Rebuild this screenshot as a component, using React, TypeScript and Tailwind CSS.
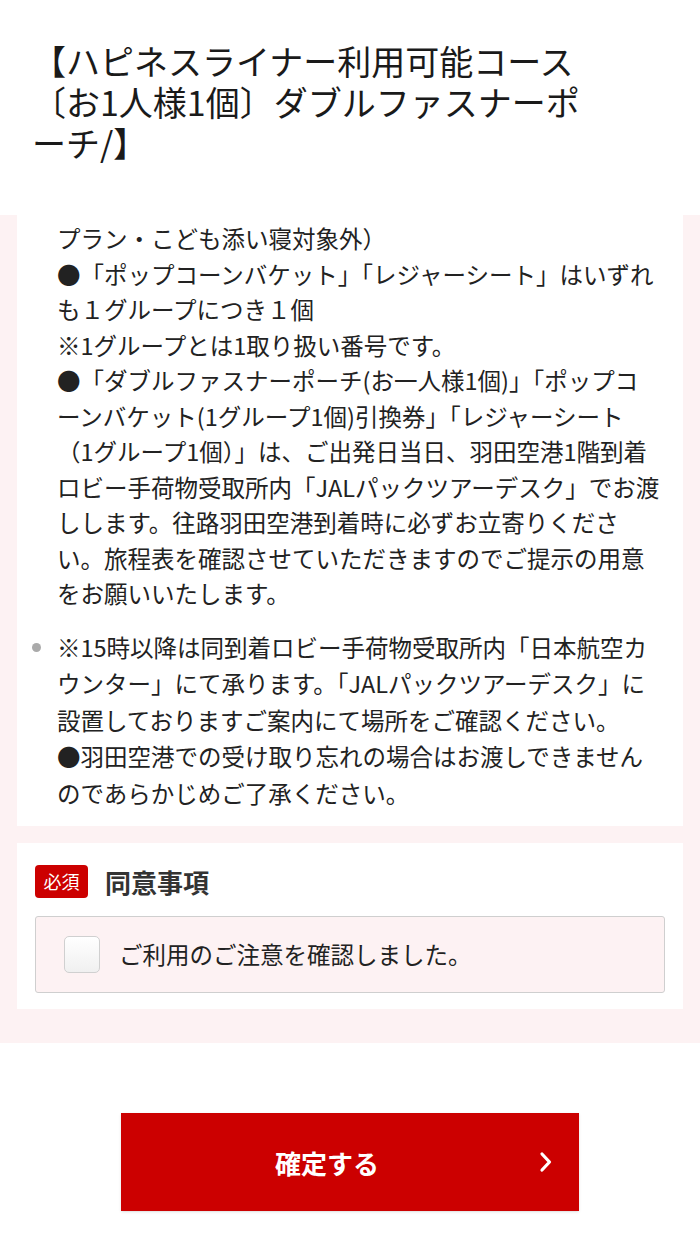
import React from 'react'

const font = { fontFamily: '"Noto Sans CJK JP", "Noto Sans", sans-serif' }

const App: React.FC = () => {
    return (
        <div className="w-[700px] min-h-[1247px] bg-white text-[#222]" style={font}>
            <header className="pl-[32px] pt-[40px] pb-[52px]">
                <h1 className="w-[562px] text-[34px] leading-[41px] text-[#1a1a1a]">
                    【ハピネスライナー利用可能コース〔お1人様1個〕ダブルファスナーポーチ/】
                </h1>
            </header>

            <main className="bg-[#fdf2f3] pb-[34px]">
                <section className="mx-[17px] bg-white pt-[6px] pb-[15px] pl-[40px] pr-[4px]">
                    <ul className="list-disc text-[23.5px] leading-[35.5px] marker:text-[#aaa]">
                        <li className="list-none">
                            プラン・こども添い寝対象外）<br />
                            ●「ポップコーンバケット」「レジャーシート」はいずれ<br />
                            も１グループにつき１個<br />
                            ※1グループとは1取り扱い番号です。<br />
                            ●「ダブルファスナーポーチ(お一人様1個)」「ポップコ<br />
                            ーンバケット(1グループ1個)引換券」「レジャーシート<br />
                            （1グループ1個）」は、ご出発日当日、羽田空港1階到着<br />
                            ロビー手荷物受取所内「JALパックツアーデスク」でお渡<br />
                            しします。往路羽田空港到着時に必ずお立寄りくださ<br />
                            い。旅程表を確認させていただきますのでご提示の用意<br />
                            をお願いいたします。
                        </li>
                        <li className="mt-[17px] leading-[36.5px]">
                            ※15時以降は同到着ロビー手荷物受取所内「日本航空カ<br />
                            ウンター」にて承ります。「JALパックツアーデスク」に<br />
                            設置しておりますご案内にて場所をご確認ください。<br />
                            ●羽田空港での受け取り忘れの場合はお渡しできません<br />
                            のであらかじめご了承ください。
                        </li>
                    </ul>
                </section>

                <section className="mx-[17px] mt-[17px] bg-white px-[18px] pt-[22px] pb-[16px]">
                    <div className="flex items-center gap-x-[17px]">
                        <span className="flex h-[33px] w-[53px] items-center justify-center rounded-[4px] bg-[#cc0000] text-[18px] text-white">必須</span>
                        <h2 className="text-[26px] font-bold leading-none text-[#333]">同意事項</h2>
                    </div>
                    <label className="mt-[18px] flex h-[77px] items-center gap-x-[19px] rounded-[3px] border border-[#cfcfcf] bg-[#fdf2f3] pl-[28px]">
                        <span className="h-[37px] w-[36px] rounded-[5px] border border-[#d0d0d0] bg-gradient-to-b from-white to-[#f0f0f0]" />
                        <span className="text-[23.5px] leading-none text-[#222]">ご利用のご注意を確認しました。</span>
                    </label>
                </section>
            </main>

            <div className="flex justify-center pt-[70px]">
                <button className="relative flex h-[98px] w-[458px] items-center justify-center bg-[#cc0000] pr-[46px] shadow-sm">
                    <span className="text-[26px] font-bold text-white">確定する</span>
                    <svg className="absolute right-[26px] top-1/2 -translate-y-1/2" width="14" height="22" viewBox="0 0 14 22" fill="none">
                        <path d="M3 3l7.5 8L3 19" stroke="white" strokeWidth="3.2" strokeLinecap="round" strokeLinejoin="round" />
                    </svg>
                </button>
            </div>
        </div>
    )
}

export default App
